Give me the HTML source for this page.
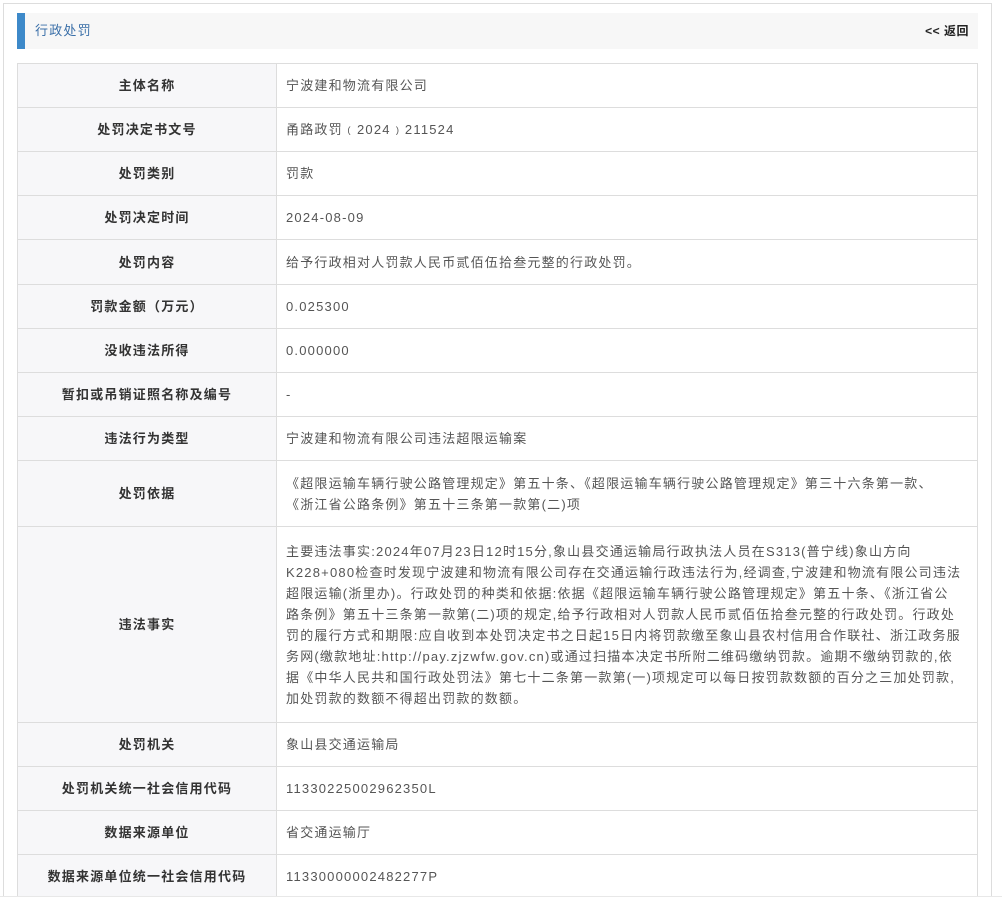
<!DOCTYPE html>
<html><head><meta charset="utf-8"><style>
html,body{margin:0;padding:0;background:#fff;width:1002px;height:905px;overflow:hidden}
body{font-family:"Liberation Sans","Noto Sans CJK SC",sans-serif;font-size:13px;color:#555;letter-spacing:1.2px}
.outer{position:absolute;left:3px;top:3px;width:989px;height:893px;border:1px solid #ddd;border-bottom:none;box-sizing:border-box}
.hdr{position:absolute;left:17px;top:13px;width:961px;height:36px;background:#f7f7f7}
.hdr .bar{position:absolute;left:0;top:0;width:8px;height:36px;background:#3d89c9}
.hdr .t{position:absolute;left:18px;top:0;line-height:36px;color:#3a6fa8;font-size:13px}
.hdr .b{position:absolute;right:9px;top:0;line-height:36px;color:#222;font-size:12px;font-weight:bold;letter-spacing:0.5px}
table{position:absolute;left:17px;top:63px;width:961px;border-collapse:collapse;table-layout:fixed}
td{border:1px solid #ddd;padding:0 9px;line-height:21px;white-space:nowrap}
td.l{width:258px;background:#f7f7f9;text-align:center;color:#333;font-weight:bold;padding:0}
tr{height:44px}
.bottom{position:absolute;left:0;top:896px;width:1002px;height:9px;background:#fff;border-top:1px solid #e8e8e8}
</style></head><body>
<div class="outer"></div>
<div class="hdr"><div class="bar"></div><div class="t">行政处罚</div><div class="b">&lt;&lt; 返回</div></div>
<table>
<tr><td class="l">主体名称</td><td>宁波建和物流有限公司</td></tr>
<tr><td class="l">处罚决定书文号</td><td>甬路政罚﹙2024﹚211524</td></tr>
<tr><td class="l">处罚类别</td><td>罚款</td></tr>
<tr><td class="l">处罚决定时间</td><td>2024-08-09</td></tr>
<tr style="height:45px"><td class="l">处罚内容</td><td>给予行政相对人罚款人民币贰佰伍拾叁元整的行政处罚。</td></tr>
<tr><td class="l">罚款金额（万元）</td><td>0.025300</td></tr>
<tr><td class="l">没收违法所得</td><td>0.000000</td></tr>
<tr><td class="l">暂扣或吊销证照名称及编号</td><td>-</td></tr>
<tr><td class="l">违法行为类型</td><td>宁波建和物流有限公司违法超限运输案</td></tr>
<tr style="height:66px"><td class="l">处罚依据</td><td>《超限运输车辆行驶公路管理规定》第五十条、《超限运输车辆行驶公路管理规定》第三十六条第一款、<br>《浙江省公路条例》第五十三条第一款第(二)项</td></tr>
<tr style="height:196px"><td class="l">违法事实</td><td>主要违法事实:2024年07月23日12时15分,象山县交通运输局行政执法人员在S313(普宁线)象山方向<br>K228+080检查时发现宁波建和物流有限公司存在交通运输行政违法行为,经调查,宁波建和物流有限公司违法<br>超限运输(浙里办)。行政处罚的种类和依据:依据《超限运输车辆行驶公路管理规定》第五十条、《浙江省公<br>路条例》第五十三条第一款第(二)项的规定,给予行政相对人罚款人民币贰佰伍拾叁元整的行政处罚。行政处<br>罚的履行方式和期限:应自收到本处罚决定书之日起15日内将罚款缴至象山县农村信用合作联社、浙江政务服<br>务网(缴款地址:http://pay.zjzwfw.gov.cn)或通过扫描本决定书所附二维码缴纳罚款。逾期不缴纳罚款的,依<br>据《中华人民共和国行政处罚法》第七十二条第一款第(一)项规定可以每日按罚款数额的百分之三加处罚款,<br>加处罚款的数额不得超出罚款的数额。</td></tr>
<tr><td class="l">处罚机关</td><td>象山县交通运输局</td></tr>
<tr><td class="l">处罚机关统一社会信用代码</td><td>11330225002962350L</td></tr>
<tr><td class="l">数据来源单位</td><td>省交通运输厅</td></tr>
<tr><td class="l">数据来源单位统一社会信用代码</td><td>11330000002482277P</td></tr>
</table>
<div class="bottom"></div>
</body></html>
